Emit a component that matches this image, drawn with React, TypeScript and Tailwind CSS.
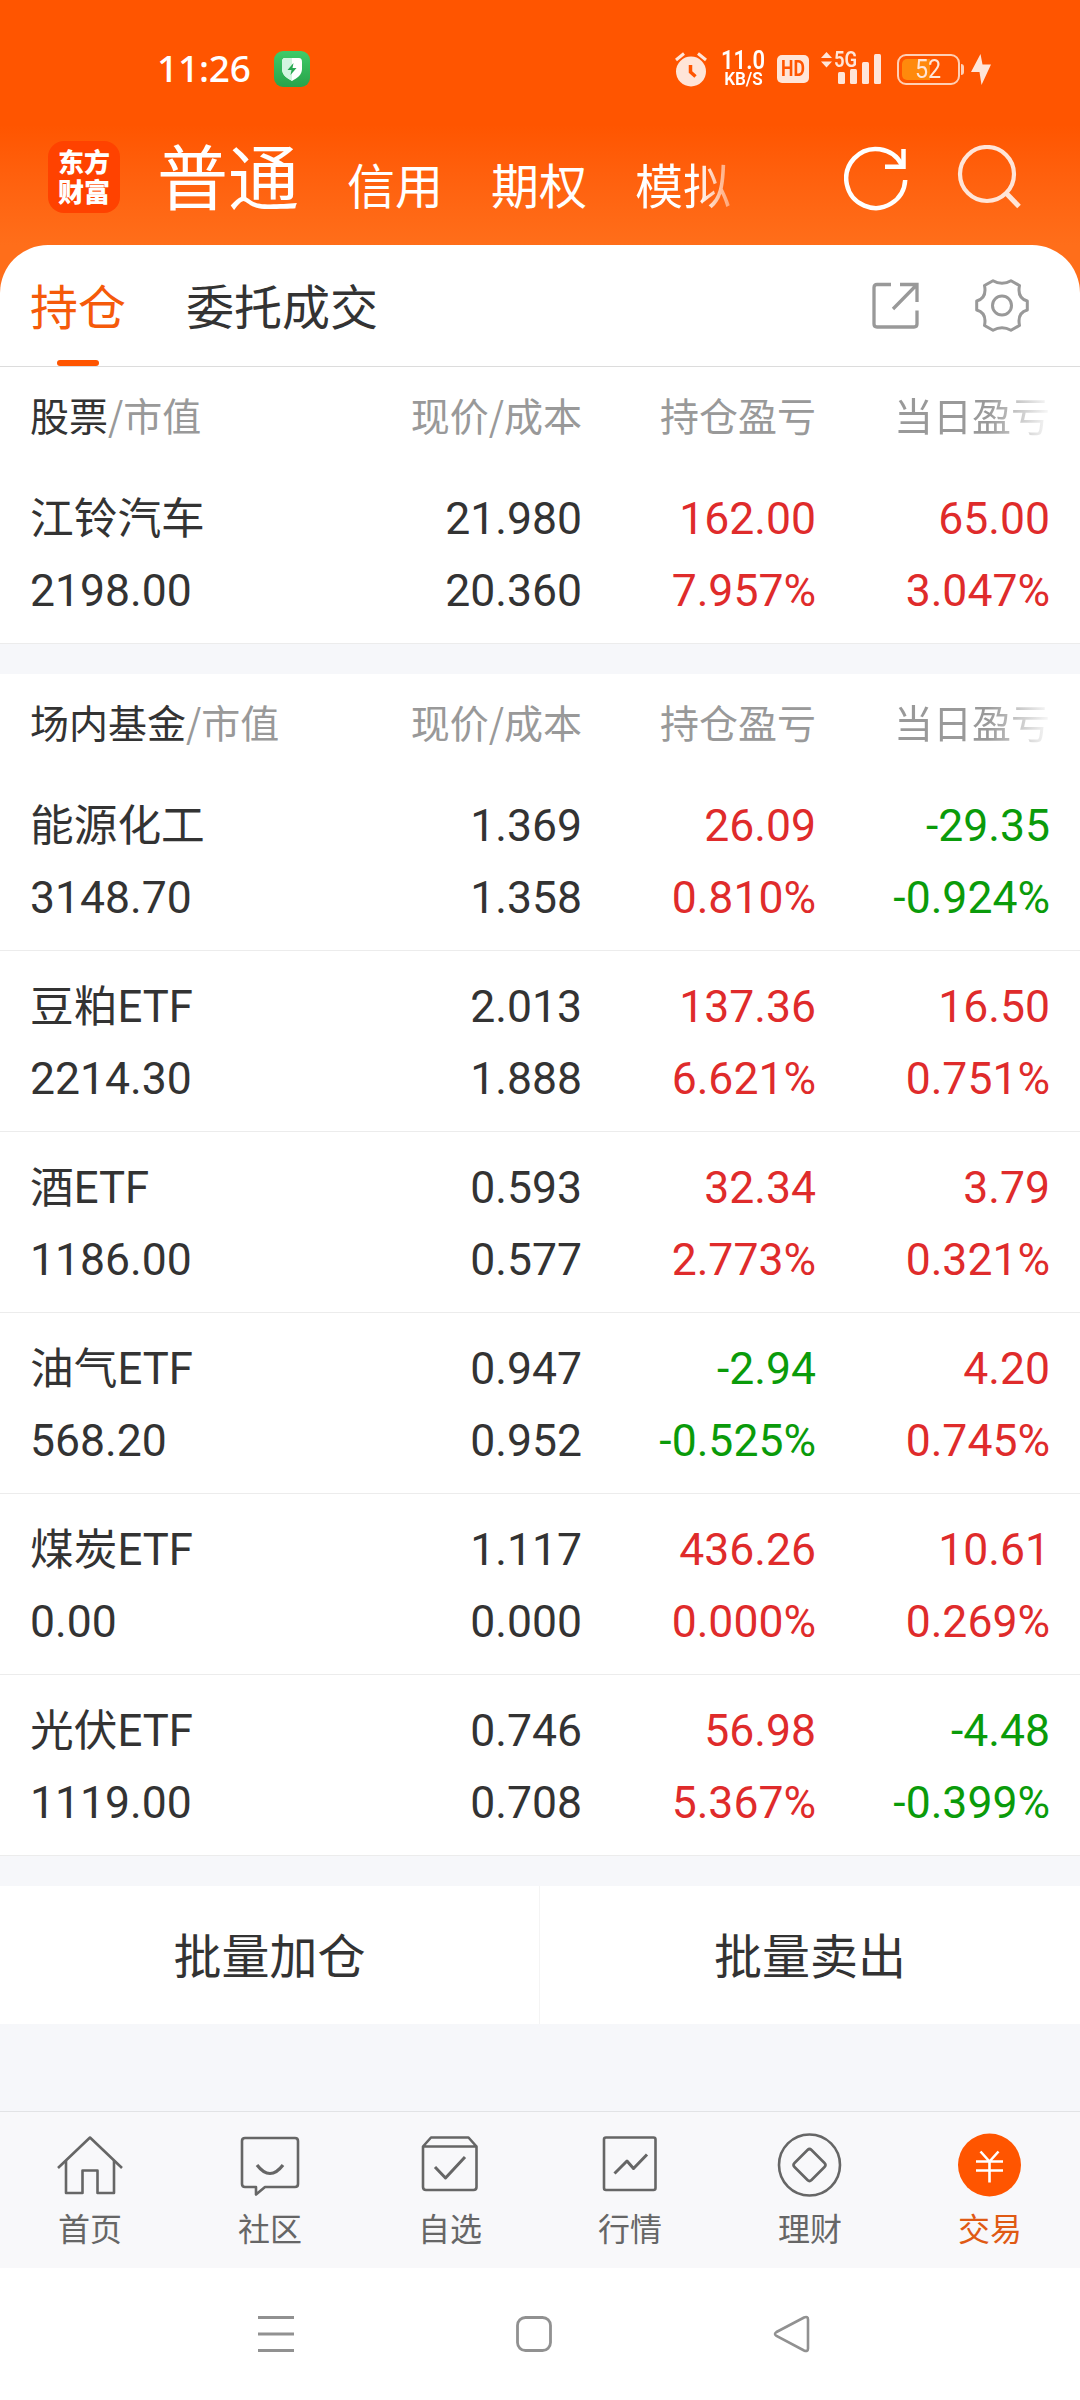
import type { ReactNode } from 'react'
import clsx from 'clsx'

interface Holding {
  name: string
  value: string
  price: string
  cost: string
  profit: string
  profitRate: string
  today: string
  todayRate: string
}

const stocks: Holding[] = [
  { name: '江铃汽车', value: '2198.00', price: '21.980', cost: '20.360', profit: '162.00', profitRate: '7.957%', today: '65.00', todayRate: '3.047%' },
]

const funds: Holding[] = [
  { name: '能源化工', value: '3148.70', price: '1.369', cost: '1.358', profit: '26.09', profitRate: '0.810%', today: '-29.35', todayRate: '-0.924%' },
  { name: '豆粕ETF', value: '2214.30', price: '2.013', cost: '1.888', profit: '137.36', profitRate: '6.621%', today: '16.50', todayRate: '0.751%' },
  { name: '酒ETF', value: '1186.00', price: '0.593', cost: '0.577', profit: '32.34', profitRate: '2.773%', today: '3.79', todayRate: '0.321%' },
  { name: '油气ETF', value: '568.20', price: '0.947', cost: '0.952', profit: '-2.94', profitRate: '-0.525%', today: '4.20', todayRate: '0.745%' },
  { name: '煤炭ETF', value: '0.00', price: '1.117', cost: '0.000', profit: '436.26', profitRate: '0.000%', today: '10.61', todayRate: '0.269%' },
  { name: '光伏ETF', value: '1119.00', price: '0.746', cost: '0.708', profit: '56.98', profitRate: '5.367%', today: '-4.48', todayRate: '-0.399%' },
]

function StatusBar() {
  return (
    <div className="flex h-[138px] items-center pl-[157px] pr-[89px] text-white">
      <span className="w-[117px] pb-[3px] font-['Noto_Sans',sans-serif] text-[37px] font-medium leading-none tracking-[-0.2px]">11:26</span>
      <svg className="h-9 w-9" viewBox="0 0 36 36">
        <defs>
          <linearGradient id="shield" x1="0" y1="0" x2="0" y2="1">
            <stop offset="0" stopColor="#3ecb69" />
            <stop offset="1" stopColor="#28a34a" />
          </linearGradient>
        </defs>
        <rect width="36" height="36" rx="9" fill="url(#shield)" />
        <path d="M11 7h14q3 0 3 4v7c0 6-5 9-10 12-5-3-10-6-10-12v-7q0-4 3-4z" fill="#fff" />
        <path d="M18 7h-7q-3 0-3 4v7c0 6 5 9 10 12z" fill="#d3f5df" />
        <path d="M19.500 12l-6 7h4l-1 5 6-7h-4z" fill="#28a851" />
      </svg>

      <div className="ml-auto flex items-center">
        <svg className="mr-3.5 h-9 w-[32px]" viewBox="0 0 32 36">
          <circle cx="16" cy="20.500" r="15" fill="#ffe5d8" />
          <path d="M1 9l8-6.500M31 9l-8-6.500" stroke="#ffe5d8" strokeWidth="3" />
          <path d="M15.500 14v7l5 4.500" fill="none" stroke="#ff5500" strokeWidth="3.500" />
        </svg>
        <div className="mr-3 flex w-11 flex-col items-center whitespace-nowrap font-[Roboto,sans-serif] font-semibold">
          <span className="scale-x-[0.88] text-[25px] leading-[19px]">11.0</span>
          <span className="scale-x-[0.9] text-[19px] leading-[18px]">KB/S</span>
        </div>
        <span className="mr-3 flex h-7 w-8 items-center justify-center rounded-[5px] bg-[#ffe5d8] text-[#ff5500]">
          <span className="scale-x-[0.8] font-[Roboto,sans-serif] text-[22px] font-bold leading-none">HD</span>
        </span>
        <div className="relative mr-4 h-9 w-[60px]">
          <svg className="h-9 w-[60px]" viewBox="0 0 60 36" fill="#ffe5d8">
            <path d="M0 7l5.500-6 5.500 6zM0 10.500h11l-5.500 6z" />
            <rect x="17" y="21" width="7" height="12" rx="1.500" />
            <rect x="29" y="18" width="7" height="15" rx="1.500" />
            <rect x="41" y="11" width="7" height="22" rx="1.500" />
            <rect x="53" y="3" width="7" height="30" rx="1.500" />
          </svg>
          <span className="absolute left-[13px] top-0 origin-left scale-x-[0.84] font-[Roboto,sans-serif] text-[22px] font-semibold leading-[18px] text-[#ffe5d8]">5G</span>
        </div>
        <div className="relative mr-[11px] flex h-[31px] w-[63px] items-center justify-center rounded-[9px] border-2 border-[#ffcfb5] font-[Roboto,sans-serif] text-[25px] leading-none text-[#ffe5d8]">
          <span className="absolute left-[3px] top-[3px] h-[21px] w-7 rounded-l-[5px] bg-[#ff8a0c]" />
          <span className="relative scale-x-[0.93]">52</span>
          <span className="absolute -right-[6px] top-2 h-[11px] w-[3px] rounded-r bg-[#ffcfb5]" />
        </div>
        <svg className="h-[31px] w-5" viewBox="0 0 20 31">
          <path d="M9.500 0L0 18h8.500l2 13L20 10.500h-8.500z" fill="#ffe5d8" />
        </svg>
      </div>
    </div>
  )
}

function AccountBar() {
  return (
    <div className="flex h-[107px] items-start pl-12 pr-[59px] text-white">
      <div className="mt-[3px] flex h-[72px] w-[72px] flex-col items-center justify-center rounded-2xl bg-[#ff4200] pb-0.5 text-[26px] font-black leading-[30px]">
        <span>东方</span>
        <span>财富</span>
      </div>
      <nav className="-mt-[5px] ml-[37px] flex items-baseline gap-12 whitespace-nowrap text-[48px] leading-[80px]">
        <span className="text-[71px]">普通</span>
        <span>信用</span>
        <span>期权</span>
        <span className="bg-linear-to-r from-white from-65% to-white/40 bg-clip-text text-transparent">模拟</span>
      </nav>
      <svg className="ml-auto mt-[7px] h-[66px] w-[66px]" viewBox="0 0 66 66" fill="none" stroke="#fff" strokeWidth="4.500">
        <path d="M58 20A29.500 29.500 0 1 0 61.200 35" />
        <path d="M59.500 4v17.700H41" />
      </svg>
      <svg className="ml-[47px] mt-[7px] h-16 w-16" viewBox="0 0 64 64" fill="none" stroke="#ffe5d8" strokeWidth="4.200">
        <circle cx="30" cy="29" r="27" />
        <path d="M49 48l13 13.500" strokeWidth="5" />
      </svg>
    </div>
  )
}

function PanelTabs() {
  return (
    <div className="flex h-[122px] items-center border-b border-[#dcdcdc] pl-[30px] pr-[51px] text-[48px] text-[#333]">
      <span className="relative flex h-full items-center pb-1 text-[#f55a0a]">
        持仓
        <span className="absolute bottom-0 left-[27px] h-1.5 w-[42px] rounded-[3px] bg-[#ff5500]" />
      </span>
      <span className="ml-[60px] pb-1">委托成交</span>
      <svg className="ml-auto h-[47px] w-[47px]" viewBox="0 0 47 47" fill="none" stroke="#999" strokeWidth="3.300">
        <path d="M19 2.500H5q-3 0-3 3V42q0 3 3 3h37q3 0 3-3V28.500" />
        <path d="M28 2.500h17v17.500M45 2.500L21 27" />
      </svg>
      <svg className="ml-[56px] h-[53px] w-[54px]" viewBox="0 0 54 53" fill="none" stroke="#999" strokeWidth="3">
        <path
          d="M18 1.700Q27 7 36 1.700L44.500 6.500C43 14 45 20 52.300 22V31C45 33 43 39 44.500 46.500L36 51.300Q27 46 18 51.300L9.500 46.500C11 39 9 33 1.700 31V22C9 20 11 14 9.500 6.500Z"
          strokeLinejoin="round"
        />
        <circle cx="27" cy="26.500" r="9.500" />
      </svg>
    </div>
  )
}

function Cell({ top, bottom, signed }: { top: string; bottom: string; signed?: boolean }) {
  const tone = (v: string) => (!signed ? 'text-[#333]' : v.startsWith('-') ? 'text-[#0a9b0a]' : 'text-[#df2b2b]')
  return (
    <div className="flex flex-col text-right">
      <span className={tone(top)}>{top}</span>
      <span className={tone(bottom)}>{bottom}</span>
    </div>
  )
}

function HoldingSection({ title, rows }: { title: string; rows: Holding[] }) {
  return (
    <section className="bg-white">
      <div className="grid h-24 grid-cols-[1fr_234px_234px_234px] items-center px-[30px] pb-0.5 text-right text-[39px] text-[#999]">
        <span className="text-left">
          <span className="text-[#333]">{title}</span>/市值
        </span>
        <span>现价/成本</span>
        <span>持仓盈亏</span>
        <span className="ml-auto bg-linear-to-r from-[#999] from-60% to-[#fafafa] bg-clip-text text-transparent">当日盈亏</span>
      </div>
      {rows.map((r) => (
        <div
          key={r.name}
          className="grid h-[181px] grid-cols-[1fr_234px_234px_234px] border-b border-[#ececec] px-[30px] pt-5 font-[Roboto,'Noto_Sans_CJK_SC',sans-serif] text-[44.5px] leading-[72px]"
        >
          <div className="flex flex-col text-[#333]">
            <span className="h-[72px] text-[43.7px]">{r.name}</span>
            <span>{r.value}</span>
          </div>
          <Cell top={r.price} bottom={r.cost} />
          <Cell top={r.profit} bottom={r.profitRate} signed />
          <Cell top={r.today} bottom={r.todayRate} signed />
        </div>
      ))}
    </section>
  )
}

function TabItem({ label, active, children }: { label: string; active?: boolean; children: ReactNode }) {
  return (
    <div className={clsx('flex flex-1 flex-col items-center pt-[19px]', active ? 'text-[#e05a14]' : 'text-[#666]')}>
      <svg className="h-[68px] w-[68px]" viewBox="0 0 68 68" fill="none" stroke="#666" strokeWidth="2.600" strokeLinejoin="round">
        {children}
      </svg>
      <span className="mt-[5px] text-[32px] leading-[46px]">{label}</span>
    </div>
  )
}

function TabBar() {
  return (
    <nav className="flex h-[157px] border-t border-[#e2e3e5] bg-[#f8f8fa]">
      <TabItem label="首页">
        <path d="M2 37L34 6.500 66 37" />
        <path d="M10 30v32h16.500V39.500h15V62H58V30" />
      </TabItem>
      <TabItem label="社区">
        <path d="M9 7h50q3 0 3 3v43q0 3-3 3H29l-9 7.500V56H9q-3 0-3-3V10q0-3 3-3z" />
        <path d="M21 34q13 17 26 0" strokeWidth="3.200" />
      </TabItem>
      <TabItem label="自选">
        <path d="M7 15.500h53.500V56q0 3-3 3h-47.500q-3 0-3-3zL15 6.500h37.500l8 9" />
        <path d="M19 36l10.500 11L49 26" strokeWidth="3" />
      </TabItem>
      <TabItem label="行情">
        <rect x="8" y="6.500" width="51.500" height="52.500" rx="2" />
        <path d="M18.500 42.500L31 30l6.500 7.500L51 23.500" strokeWidth="3" />
      </TabItem>
      <TabItem label="理财">
        <circle cx="33.500" cy="34" r="30.500" />
        <path d="M31.500 19q2-2 4 0l13 13q2 2 0 4L35.500 49q-2 2-4 0L18.500 36q-2-2 0-4z" />
      </TabItem>
      <TabItem label="交易" active>
        <circle cx="33.500" cy="34" r="31.500" fill="#ff5500" stroke="none" />
        <path d="M24.500 20.500l9 10 9-10M33.500 30v21.500M20 30.500h27M20 39.500h27" stroke="#fff" />
      </TabItem>
    </nav>
  )
}

function SystemNav() {
  return (
    <div className="flex h-[132px] items-center justify-center gap-[218px] bg-white pr-[13px]">
      <svg className="h-10 w-10" viewBox="0 0 40 40" stroke="#919191" strokeWidth="3">
        <path d="M2 3.500h36M2 20h36M2 36.500h36" />
      </svg>
      <svg className="h-10 w-10" viewBox="0 0 40 40" fill="none" stroke="#919191" strokeWidth="2.800">
        <rect x="3.500" y="3.500" width="33" height="33" rx="8" />
      </svg>
      <svg className="h-10 w-10" viewBox="0 0 40 40" fill="none" stroke="#919191" strokeWidth="2.600">
        <path d="M4.500 18L32 3.500q4-1.500 4 2v29q0 3.500-4 2L4.500 22q-3-2 0-4z" />
      </svg>
    </div>
  )
}

export default function App() {
  return (
    <div className="w-[1080px] overflow-hidden bg-[#f6f7fa] font-['Noto_Sans_CJK_SC',sans-serif] font-normal">
      <header className="h-[293px] bg-linear-to-b from-[#ff5500] from-[125px] to-[#ff6e1a] to-[245px]">
        <StatusBar />
        <AccountBar />
      </header>
      <main className="-mt-12">
        <div className="rounded-t-[48px] bg-white">
          <PanelTabs />
          <HoldingSection title="股票" rows={stocks} />
        </div>
        <div className="mt-[30px]">
          <HoldingSection title="场内基金" rows={funds} />
        </div>
        <div className="mb-[87px] mt-[30px] grid h-[138px] grid-cols-2 bg-white text-center text-[48px] leading-[134px] text-[#333]">
          <span className="border-r border-[#f4f4f4]">批量加仓</span>
          <span>批量卖出</span>
        </div>
      </main>
      <TabBar />
      <SystemNav />
    </div>
  )
}
